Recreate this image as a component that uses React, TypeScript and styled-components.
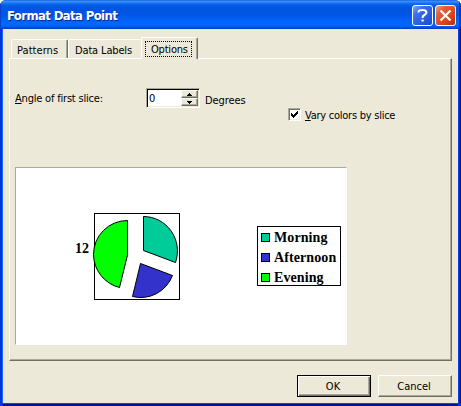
import React from "react";
import styled, { createGlobalStyle } from "styled-components";

const Global = createGlobalStyle`
  * { box-sizing: border-box; }
  body { margin: 0; background: #fff; }
`;

const Dialog = styled.div`
  width: 461px;
  height: 406px;
  display: flex;
  flex-direction: column;
  overflow: hidden;
  border-radius: 6px 6px 0 0;
  background: #0831d9;
  font: 11px/14px "DejaVu Sans Condensed", "DejaVu Sans", sans-serif;
  color: #000;
`;

const TitleBar = styled.header`
  height: 29px;
  flex: none;
  display: flex;
  align-items: flex-start;
  gap: 2px;
  padding: 5px 5px 0 7px;
  background: linear-gradient(
    180deg,
    #0a4fd0 0, #3d95ff 1px, #2f86fa 2px, #0b68ee 4px, #0058e3 6px, #0054e0 10px,
    #0056e6 15px, #0062f8 20px, #0067ff 24px, #0064f8 26px, #0046cf 28px, #003cc0 29px
  );
  box-shadow: inset 1px 0 #0a3fcf, inset -2px 0 #0535bb;
`;

const Title = styled.h1`
  flex: 1;
  margin: 3px 0 0;
  font: bold 13px/16px "DejaVu Sans Condensed", "DejaVu Sans", sans-serif;
  letter-spacing: -0.62px;
  color: #fff;
  text-shadow: 1px 1px #0a2a8c;
`;

const CaptionButton = styled.button<{ $danger?: boolean }>`
  width: 21px;
  height: 21px;
  padding: 0;
  border: 1px solid #fff;
  border-radius: 3px;
  background: ${(p) =>
    p.$danger
      ? "linear-gradient(135deg, #f0a48c 0%, #e4603c 25%, #dc4318 65%, #b92f0a 100%)"
      : "linear-gradient(135deg, #84a8f8 0%, #3c70ee 28%, #2a5ce0 65%, #1d49c4 100%)"};
  svg { display: block; }
`;

const Body = styled.main`
  flex: 1;
  display: flex;
  flex-direction: column;
  margin: 0 3px 3px;
  padding: 8px 6px 6px;
  background: #ece9d8;
  box-shadow: -1px 0 #166aee, 1px 0 #0841e0, 0 1px #0848e8, 0 3px #001590,
    2px 0 #0024c0, 3px 0 #001590;
`;

const TabStrip = styled.nav`
  height: 21px;
  display: flex;
  align-items: flex-end;
  padding-left: 2px;
`;

const Tab = styled.div<{ $w: number; $active?: boolean; $last?: boolean; $spacing: number }>`
  width: ${(p) => p.$w}px;
  height: ${(p) => (p.$active ? 22 : 19)}px;
  margin-bottom: ${(p) => (p.$active ? -1 : 0)}px;
  padding: ${(p) => (p.$active ? "3px 0 0 3px" : p.$last ? "4px 0 0 6px" : "4px 0 0 5px")};
  white-space: nowrap;
  letter-spacing: ${(p) => p.$spacing}px;
  background: #ece9d8;
  border: 1px solid #fff;
  border-bottom: 0;
  border-right: ${(p) => (p.$last ? 0 : "1px solid #716f64")};
  border-radius: 2px 2px 0 0;
  box-shadow: ${(p) => (p.$last ? "none" : "inset -1px 0 #aca899")};
  z-index: ${(p) => (p.$active ? 1 : 0)};
`;

const FocusFrame = styled.span`
  display: block;
  width: 47px;
  height: 16px;
  padding-left: 5px;
  border: 1px dotted #000;
  line-height: 15px;
`;

const Panel = styled.section`
  width: 443px;
  height: 303px;
  display: flex;
  flex-direction: column;
  padding: 29px 5px 0;
  border: 1px solid #fff;
  border-right-color: #716f64;
  border-bottom-color: #716f64;
  box-shadow: inset -1px -1px #aca899;
`;

const Controls = styled.div`
  height: 79px;
  display: flex;
  align-items: flex-start;
`;

const Label = styled.label<{ $w: number; $top: number; $spacing: number }>`
  width: ${(p) => p.$w}px;
  flex: none;
  margin-top: ${(p) => p.$top}px;
  white-space: nowrap;
  letter-spacing: ${(p) => p.$spacing}px;
`;

const Mnemonic = styled.span`
  text-decoration: underline;
  text-underline-offset: 1px;
  text-decoration-thickness: 1px;
`;

const Spinner = styled.div`
  width: 54px;
  height: 20px;
  flex: none;
  display: flex;
  margin-right: 5px;
  border: 1px solid #aca899;
  border-right-color: #fff;
  border-bottom-color: #fff;
  background: #fff;
  box-shadow: inset 1px 1px #000, inset -1px -1px #ece9d8;
`;

const SpinValue = styled.span`
  flex: 1;
  padding: 3px 0 0 2px;
`;

const SpinButtons = styled.div`
  width: 17px;
  display: flex;
  flex-direction: column;
  margin: 1px 1px 1px 0;
`;

const SpinButton = styled.button`
  height: 8px;
  padding: 0;
  border: 1px solid #fff;
  border-right-color: #716f64;
  border-bottom-color: #716f64;
  background: #ece9d8;
  box-shadow: inset -1px -1px #aca899;
  svg { display: block; margin: 1px auto 0 5px; }
`;

const CheckBox = styled.span`
  width: 13px;
  height: 13px;
  flex: none;
  margin: 20px 4px 0 0;
  border: 1px solid #aca899;
  border-right-color: #fff;
  border-bottom-color: #fff;
  background: #fff;
  box-shadow: inset 1px 1px #716f64, inset -1px -1px #f1efe2;
  svg { display: block; }
`;

const Preview = styled.div`
  width: 332px;
  height: 178px;
  display: flex;
  align-items: flex-start;
  border: 1px solid #aca899;
  border-right-color: #fff;
  border-bottom-color: #fff;
  background: #fff;
  font: bold 14px/20px "Liberation Serif", serif;
`;

const DataLabel = styled.span`
  width: 18px;
  margin: 71px 0 0 59px;
`;

const Pie = styled.svg`
  display: block;
  flex: none;
  margin: 45px 77px 0 0;
  overflow: visible;
`;

const Legend = styled.ul`
  width: 84px;
  height: 60px;
  margin: 58px 0 0;
  padding: 0 0 0 3px;
  list-style: none;
  border: 1px solid #000;
`;

const LegendItem = styled.li`
  height: 20px;
  display: flex;
  align-items: flex-start;
  gap: 4px;
  white-space: nowrap;
  line-height: 22px;
  letter-spacing: 0.1px;
`;

const Swatch = styled.span<{ $color: string }>`
  width: 9px;
  height: 9px;
  flex: none;
  margin-top: 6px;
  border: 1px solid #000;
  background: ${(p) => p.$color};
`;

const Footer = styled.footer`
  display: flex;
  justify-content: flex-end;
  gap: 7px;
  margin-top: 14px;
`;

const PushButton = styled.button<{ $default?: boolean }>`
  width: 74px;
  height: 22px;
  padding: 1px 2px 0 0;
  font: inherit;
  border: 1px solid ${(p) => (p.$default ? "#000" : "#fff")};
  ${(p) => (p.$default ? "" : "border-right-color: #716f64; border-bottom-color: #716f64;")}
  background: #ece9d8;
  box-shadow: ${(p) =>
    p.$default
      ? "inset 1px 1px #fff, inset -1px -1px #716f64, inset -2px -2px #aca899"
      : "inset -1px -1px #aca899"};
`;

const legend = [
  { name: "Morning", color: "#00cc99" },
  { name: "Afternoon", color: "#3333cc" },
  { name: "Evening", color: "#00ff00" },
];

function Arrow({ down }: { down?: boolean }) {
  return (
    <svg width="5" height="3" shapeRendering="crispEdges">
      <path d={down ? "M0 0h5v1h-1v1h-1v1h-1v-1h-1v-1h-1z" : "M2 0h1v1h1v1h1v1h-5v-1h1v-1h1z"} />
    </svg>
  );
}

export default function App() {
  return (
    <>
      <Global />
      <Dialog>
        <TitleBar>
          <Title>Format Data Point</Title>
          <CaptionButton aria-label="Help">
            <svg width="19" height="19" fill="none" stroke="#fff" strokeWidth="2">
              <path d="M5.500 6.500V5.500Q6 4 9.500 4T13.500 6.200Q13.500 8 11.500 9T9.500 12" />
              <path d="M8.500 14.500h2.200" />
            </svg>
          </CaptionButton>
          <CaptionButton $danger aria-label="Close">
            <svg width="19" height="19" stroke="#fff" strokeWidth="2.200">
              <path d="M4.500 4.500l10 10M14.500 4.500l-10 10" />
            </svg>
          </CaptionButton>
        </TitleBar>
        <Body>
          <TabStrip>
            <Tab $w={57} $spacing={0.05}>Patterns</Tab>
            <Tab $w={73} $spacing={-0.15} $last>Data Labels</Tab>
            <Tab $w={57} $spacing={-0.2} $active>
              <FocusFrame>Options</FocusFrame>
            </Tab>
          </TabStrip>
          <Panel>
            <Controls>
              <Label $w={131} $top={4} $spacing={-0.2}>
                <Mnemonic>A</Mnemonic>ngle of first slice:
              </Label>
              <Spinner>
                <SpinValue>0</SpinValue>
                <SpinButtons>
                  <SpinButton aria-label="Increase"><Arrow /></SpinButton>
                  <SpinButton aria-label="Decrease"><Arrow down /></SpinButton>
                </SpinButtons>
              </Spinner>
              <Label $w={83} $top={6} $spacing={-0.1}>Degrees</Label>
              <CheckBox>
                <svg width="11" height="11" shapeRendering="crispEdges">
                  <path d="M2 4h1v1h1v1h1v-1h1v-1h1v-1h1v-1h1v3h-1v1h-1v1h-1v1h-1v1h-1v-1h-1v-1h-1z" />
                </svg>
              </CheckBox>
              <Label $w={92} $top={21} $spacing={-0.25}>
                <Mnemonic>V</Mnemonic>ary colors by slice
              </Label>
            </Controls>
            <Preview>
              <DataLabel>12</DataLabel>
              <Pie width="87" height="87" stroke="#000" strokeWidth="1">
                <path d="M1.500 .5h85v86h-85z" fill="none" shapeRendering="crispEdges" />
                <path d="M34.500 7.500V42L26.500 74.500A34.500 34.500 0 0 1 .5 41.500A34 34 0 0 1 34.500 7.500Z" fill="#00ff00" />
                <path d="M50.500 3.500A34 34.500 0 0 1 82.500 49.500L50.500 37.500Z" fill="#00cc99" />
                <path d="M47.500 50.500L79.500 62.500A34 34.500 0 0 1 39.500 83.500Z" fill="#3333cc" />
              </Pie>
              <Legend>
                {legend.map((item) => (
                  <LegendItem key={item.name}>
                    <Swatch $color={item.color} />
                    {item.name}
                  </LegendItem>
                ))}
              </Legend>
            </Preview>
          </Panel>
          <Footer>
            <PushButton $default>OK</PushButton>
            <PushButton>Cancel</PushButton>
          </Footer>
        </Body>
      </Dialog>
    </>
  );
}
